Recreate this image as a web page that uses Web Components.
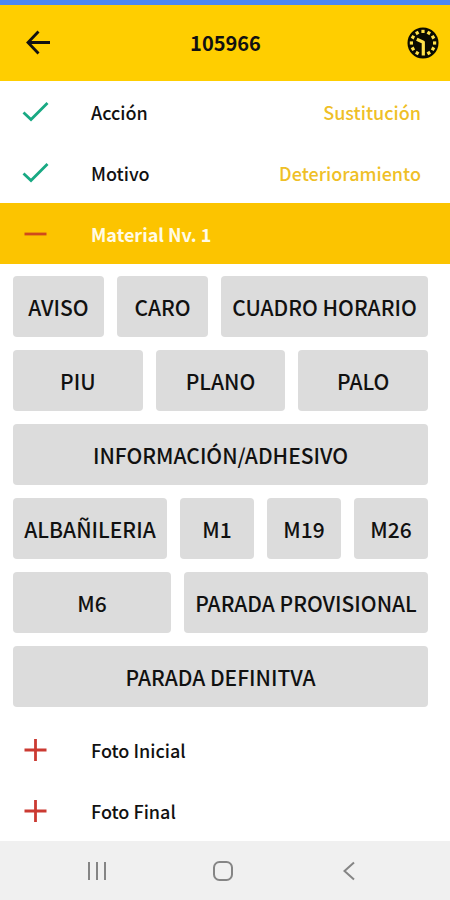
<!DOCTYPE html>
<html lang="es">
<head>
<meta charset="utf-8">
<meta name="viewport" content="width=device-width, initial-scale=1">
<title>105966</title>
<style>
  body { margin: 0; background: #fff; color: #111; font-family: "Noto Sans CJK JP", "Noto Sans", sans-serif; font-size: 18px; line-height: 24px; font-weight: 500; }
</style>
</head>
<body>
<task-screen>
  <app-header slot="header">105966</app-header>
  <step-row state="done" value="Sustitución">Acción</step-row>
  <step-row state="done" value="Deterioramiento">Motivo</step-row>
  <step-row state="open">Material Nv. 1</step-row>
  <option-list>
    <option-line><option-button style="--share:91">AVISO</option-button><option-button style="--share:91">CARO</option-button><option-button style="--share:207">CUADRO HORARIO</option-button></option-line>
    <option-line><option-button>PIU</option-button><option-button>PLANO</option-button><option-button>PALO</option-button></option-line>
    <option-line><option-button>INFORMACIÓN/ADHESIVO</option-button></option-line>
    <option-line><option-button style="--share:154">ALBAÑILERIA</option-button><option-button style="--share:74">M1</option-button><option-button style="--share:74">M19</option-button><option-button style="--share:74">M26</option-button></option-line>
    <option-line><option-button style="--share:158">M6</option-button><option-button style="--share:244">PARADA PROVISIONAL</option-button></option-line>
    <option-line><option-button>PARADA DEFINITVA</option-button></option-line>
  </option-list>
  <step-row state="closed">Foto Inicial</step-row>
  <step-row state="closed">Foto Final</step-row>
  <system-nav slot="footer"></system-nav>
</task-screen>
<script>
const reset = `*{box-sizing:border-box} button{margin:0;padding:0;border:0;background:none;color:inherit;font:inherit;cursor:pointer} svg{display:block;fill:none}`;
const define = (name, render) => customElements.define(name, class extends HTMLElement {
  connectedCallback() {
    if (!this.shadowRoot) this.attachShadow({ mode: "open" }).innerHTML = render(this);
  }
});

define("task-screen", () => `<style>${reset}
  :host{box-sizing:border-box;display:flex;flex-direction:column;min-height:100vh;border-top:5px solid #4b87f3}
  main{flex:1}
</style><slot name="header"></slot><main><slot></slot></main><slot name="footer"></slot>`);

define("app-header", () => {
  const dots = Array.from({ length: 12 }, (_, i) => i === 6 ? "" :
    `<rect x="14.4" y="2.8" width="3.200" height="3.200" fill="#ffe14a" transform="rotate(${i * 30} 16 16)"/>`).join("");
  return `<style>${reset}
  :host{display:block;background:#ffce00;color:#111}
  header{display:grid;grid-template-columns:1fr auto 1fr;align-items:center;height:76px;padding:0 11px 0 12px}
  h1{margin:0;font-size:20px;line-height:24px;font-weight:700}
  button:first-child{justify-self:start;padding:0 12px}
  button:last-child{justify-self:end}
</style><header>
  <button type="button" aria-label="Volver"><svg width="28" height="28" viewBox="0 0 28 28" stroke="#111" stroke-width="2.8"><path d="M14.5 2.5 4 13.5l10.500 11M4.500 13.500H26"/></svg></button>
  <h1><slot></slot></h1>
  <button type="button" aria-label="Historial"><svg width="32" height="32" viewBox="0 0 32 32"><circle cx="16" cy="16" r="15.500" fill="#0b0b00"/>${dots}<path d="M9.800 12.200 16.300 15.200V28.500" stroke="#ffe14a" stroke-width="3.200" stroke-linejoin="round"/></svg></button>
</header>`;
});

const marks = {
  done: `<path d="M1.500 14.500 9 21.500 25.500 5" stroke="#18a983"/>`,
  open: `<path d="M2.500 14h22" stroke="#cf4a1c"/>`,
  closed: `<path d="M2.500 14h22M13.500 3v22" stroke="#cb3a32"/>`
};
define("step-row", el => `<style>${reset}
  :host{display:block}
  :host([state=open]){background:#fcc400;color:#fffbe6;font-weight:700}
  button{display:flex;align-items:center;width:100%;height:61px;padding:0 29px 0 22px;text-align:left}
  .label{flex:1;padding-left:42px}
  .value{color:#efbf27}
</style><button type="button" aria-expanded="${el.getAttribute("state") === "open"}">
  <svg width="27" height="27" viewBox="0 0 27 27" stroke-width="2.800" aria-hidden="true">${marks[el.getAttribute("state")]}</svg>
  <span class="label"><slot></slot></span>${el.hasAttribute("value") ? `<span class="value">${el.getAttribute("value")}</span>` : ""}
</button>`);

define("option-list", () => `<style>:host{display:flex;flex-direction:column;gap:13px;padding:12px 22px 12px 13px}</style><slot></slot>`);
define("option-line", () => `<style>:host{display:flex;gap:13px}</style><slot></slot>`);
define("option-button", () => `<style>${reset}
  :host{display:block;flex:var(--share,1) 1 0;min-width:0}
  button{width:100%;height:61px;border-radius:4px;background:#dcdcdc;font-size:21px;white-space:nowrap}
</style><button type="button"><slot></slot></button>`);

define("system-nav", () => `<style>${reset}
  :host{display:block;background:#f0f0f0}
  nav{display:grid;grid-template-columns:repeat(3,1fr);height:59px;padding:0 38px 0 34px}
  button{display:grid;place-items:center}
  svg{stroke:#858585;stroke-width:2}
</style><nav aria-label="Sistema">
  <button type="button" aria-label="Recientes"><svg width="24" height="24" viewBox="0 0 24 24"><path d="M4 3v18M12 3v18M20 3v18"/></svg></button>
  <button type="button" aria-label="Inicio"><svg width="24" height="24" viewBox="0 0 24 24"><rect x="3" y="3" width="18" height="18" rx="5.500"/></svg></button>
  <button type="button" aria-label="Atrás"><svg width="24" height="24" viewBox="0 0 24 24"><path d="M17 3.500 7.500 12l9.500 8.500"/></svg></button>
</nav>`);
</script>
</body>
</html>
